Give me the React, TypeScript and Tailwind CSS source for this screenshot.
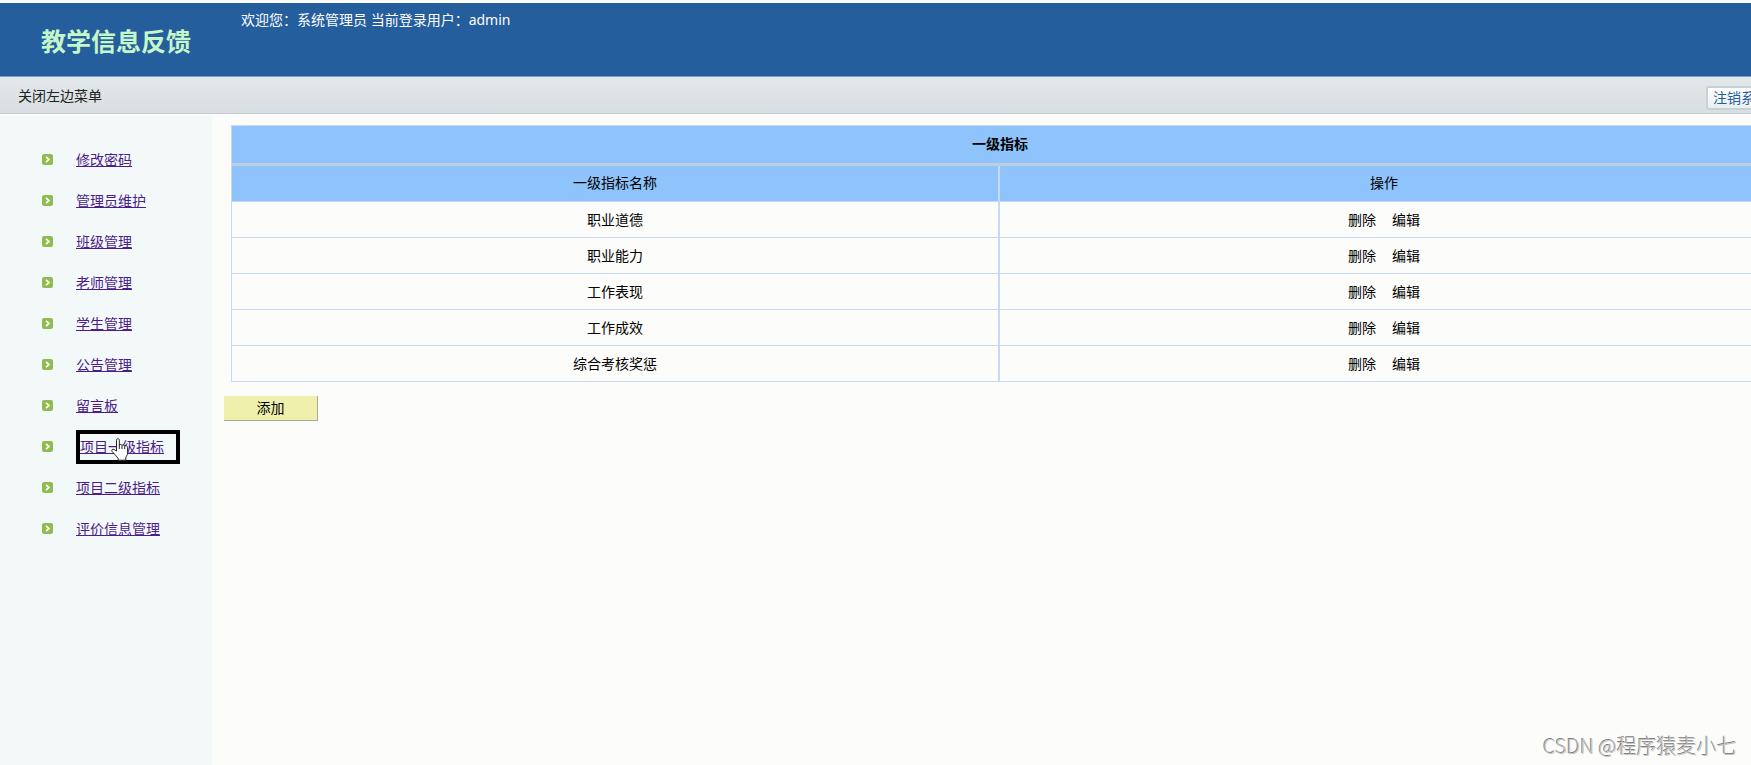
const menu = [
  '修改密码',
  '管理员维护',
  '班级管理',
  '老师管理',
  '学生管理',
  '公告管理',
  '留言板',
  '项目一级指标',
  '项目二级指标',
  '评价信息管理',
];

const current = '项目一级指标';

const indicators = ['职业道德', '职业能力', '工作表现', '工作成效', '综合考核奖惩'];

function Bullet() {
  return (
    <svg className="size-[11px] shrink-0" viewBox="0 0 11 11" aria-hidden="true">
      <rect width="11" height="11" rx="2.2" fill="#8fbc4e" />
      <path d="M4 2.8 7 5.5 4 8.2" fill="none" stroke="#fff" strokeWidth="1.7" />
    </svg>
  );
}

function HandCursor() {
  return (
    <svg className="absolute left-[31px] top-[4px] h-[23px] w-[18px]" viewBox="0 0 18 23" aria-hidden="true">
      <path
        d="M5.500 13V2.200C5.500.2 8.300.2 8.300 2.200v5c.3-1.100 2.500-1 2.700.4.5-1 2.500-.8 2.700.6.700-.9 2.900-.5 2.900 1.300v5.300c0 2.400-1.500 3.400-1.800 5v2.400H7.200v-1.800C5.800 18.600 3.500 16.200 1 13.300c-.9-1.300.7-2.700 2.100-1.800z"
        fill="#fff"
        stroke="#222"
        strokeWidth="1"
        strokeLinejoin="round"
      />
      <path d="M8.300 7v4M11 7.800v3.200M13.700 8.400v2.600" stroke="#222" strokeWidth="1" />
    </svg>
  );
}

export default function App() {
  return (
    <div className="relative flex min-h-screen flex-col overflow-hidden bg-[#fcfcfa] font-['Noto_Sans','Noto_Sans_CJK_SC',sans-serif] text-[14px] leading-5 text-black">
      <header className="mt-[3px] flex h-[74px] border-b border-[#7d9cc0] bg-[#255e9d]">
        <h1 className="w-[241px] shrink-0 pl-[41px] pt-[22px] text-[25px] font-bold leading-8 text-[#c4f7c9]">
          教学信息反馈
        </h1>
        <p className="pt-[7px] text-white">欢迎您：系统管理员 当前登录用户：admin</p>
      </header>

      <div className="flex h-[37px] items-center justify-between border-b border-[#c3cfd2] bg-linear-to-b from-[#e3e8ea] to-[#d8dee1] pl-[18px] pt-0.5">
        <button type="button" className="text-[#222]">关闭左边菜单</button>
        <button
          type="button"
          className="-mr-[25px] mt-1 h-6 w-[70px] shrink-0 rounded-[3px] border-2 border-[#c5d3d6] bg-linear-to-b from-white to-[#e9eeee] text-[#255e9d] whitespace-nowrap"
        >
          注销系统
        </button>
      </div>

      <div className="flex flex-1 pt-[2px]">
        <nav className="w-[212px] shrink-0 bg-[#f3f9f9] pt-[23px]">
          <ul>
            {menu.map((item) => (
              <li key={item} className="flex h-[41px] items-center pl-[42px]">
                <Bullet />
                {item === current ? (
                  <span className="relative ml-[23px] flex h-[34px] w-[104px] items-center border-4 border-black">
                    <a href="#" className="text-[#4b1c8a] underline">{item}</a>
                    <HandCursor />
                  </span>
                ) : (
                  <a href="#" className="ml-[23px] text-[#4b1c8a] underline">{item}</a>
                )}
              </li>
            ))}
          </ul>
        </nav>

        <main className="min-w-0 flex-1 pl-3 pt-[9px]">
          {/* the table is wider than the frame and runs past its right edge */}
          <div className="-mr-[18px] pl-[7px]">
            <table className="w-full table-fixed border-separate border-spacing-0 border border-b-0 border-[#c5daf5] text-center">
              <thead>
                <tr className="h-[40px] bg-[#8ec4fb]">
                  <th colSpan={2} className="border-b-3 border-[#bccfe2] pb-0.5 font-bold">一级指标</th>
                </tr>
                <tr className="h-[36px] bg-[#8ec4fb]">
                  <th className="border-b border-r-2 border-[#c5daf5] pb-0.5 font-normal">一级指标名称</th>
                  <th className="border-b border-[#c5daf5] pb-0.5 font-normal">操作</th>
                </tr>
              </thead>
              <tbody>
                {indicators.map((name) => (
                  <tr key={name} className="h-[36px]">
                    <td className="border-b border-r-2 border-[#c5daf5]">{name}</td>
                    <td className="border-b border-[#c5daf5]">
                      <div className="flex justify-center gap-4">
                        <a href="#">删除</a>
                        <a href="#">编辑</a>
                      </div>
                    </td>
                  </tr>
                ))}
              </tbody>
            </table>
          </div>
          <button
            type="button"
            className="mt-[14px] h-[25px] w-[94px] border-b border-r border-[#a9a99b] bg-[#eef0ab]"
          >
            添加
          </button>
        </main>
      </div>

      <div className="absolute bottom-[5px] right-[14px] font-['Noto_Sans_CJK_SC',sans-serif] text-[20px] font-light leading-7 text-[#c4c4c4] [text-shadow:-1px_-1px_0_#808080]">
        CSDN @程序猿麦小七
      </div>
    </div>
  );
}
